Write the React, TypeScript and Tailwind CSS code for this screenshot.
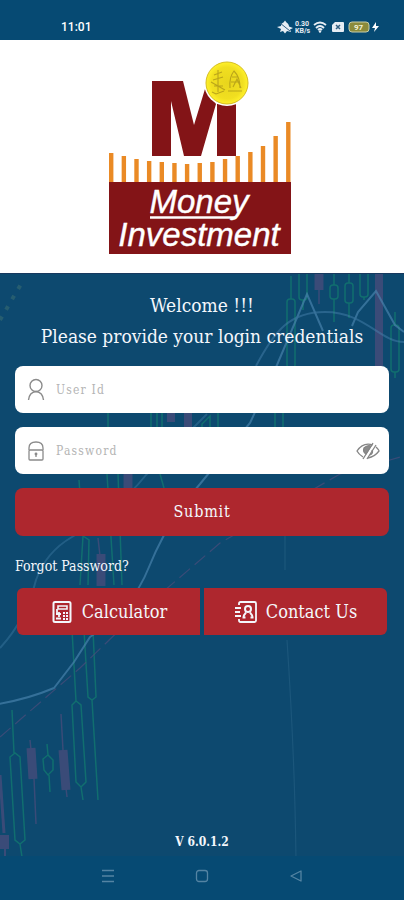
import React, { useState } from "react";

const SERIF = "font-['DejaVu_Serif_Condensed','DejaVu_Serif',serif]";

// [x, bar top, bar bottom, wick top, wick bottom]
const greenCandles = [
  [291, 299, 368, 276, 372],
  [303, 262, 300, 258, 310],
  [334, 285, 299, 270, 322],
  [349, 283, 303, 270, 318],
  [364, 262, 297, 258, 300],
  [395, 325, 372, 312, 378],
];

const bars = [30, 27, 24, 22, 21, 20, 19, 20, 21, 24, 27, 31, 37, 47, 61];

const MarketBackdrop = () => (
  <svg
    className="absolute inset-0 h-full w-full"
    viewBox="0 274 404 582"
    preserveAspectRatio="xMidYMid slice"
    fill="none"
    aria-hidden="true"
  >
    <g stroke="#12786f" strokeWidth="1.5" opacity="0.8">
      {greenCandles.map(([x, top, bottom, wickTop, wickBottom]) => (
        <g key={`${x}-${top}`}>
          <path d={`M${x} ${wickTop}V${top}M${x} ${bottom}V${wickBottom}`} />
          <rect x={x - 4} y={top} width="8" height={bottom - top} rx="3" />
        </g>
      ))}
      <path d="M108 410V428M151 410V428M157 410V428M162 410V428M202 428V424L210 416V428M218 412V428M275 410V428M283 410V428" />
      {/* lower left cluster leans slightly to the right */}
      <path d="M12 710L14 753M10 757L15 753L20 757L25 840L20 844L15 840ZM20 844L22 857" />
      <path d="M47 744L48 755M43 759L48 755L53 760V770L48 775L44 770ZM49 775L50 792" />
      <path d="M72 630L76 701M72 705L76 701L81 705L86 782L81 787L76 782ZM81 787L83 800" />
      <path d="M84 630L88 697L92 700L96 697L93 630M92 700L98 800" />
      <path d="M79 480L83 536L80 585M83 536L89 540L88 585M107 474L114 585M118 474L122 585M160 474L164 488" />
    </g>
    <g stroke="#4d4d7c" opacity="0.7">
      <path d="M319 274V290" strokeWidth="9" />
      <path d="M319 290V304" strokeWidth="1.5" />
      <path d="M379 274V366" strokeWidth="8" />
      <path d="M188 412V428" strokeWidth="8" />
      <path d="M171 412V422" strokeWidth="8" />
      <path d="M128 474V488" strokeWidth="9" />
      <path d="M101 554V586" strokeWidth="9" />
      <path d="M98 538L100 556M30 740L31 750M34 778L36 824M61 714L63 750M66 788L67 797" strokeWidth="1.5" />
      <path d="M31 748L33 779M63 750L66 790" strokeWidth="9" />
      <path d="M0 775L4 833" strokeWidth="3" />
      <path d="M0 842H9" strokeWidth="14" />
      <path d="M5 848V858" strokeWidth="2" />
      <path d="M0 737L80 668L130 620L220 543L340 474L404 456" strokeWidth="1.2" strokeDasharray="14 6" />
    </g>
    <g stroke="#4b86b0" strokeWidth="2" opacity="0.65">
      <path d="M-2 704Q28 699 54 688L74 662L90 637Q132 610 149 567Q168 520 200 484L250 423L277 365L307 294L323 331" />
      <path d="M352 326L358 312L376 291L395 325L404 332" />
      <path d="M256 366C275 330 290 312 325 312C365 312 380 342 404 342" opacity="0.7" />
      <path d="M0 648Q26 620 36 580Q46 552 72 537Q118 510 146 475L207 414" opacity="0.55" />
    </g>
    <path d="M287 640Q295 760 296 862M285 490V570" stroke="#2a6387" strokeWidth="1.2" opacity="0.5" />
    <path d="M0 320L24 279" stroke="#4d7c72" strokeWidth="4" strokeDasharray="4 8" opacity="0.4" />
  </svg>
);

const StatusBar = () => (
  <div className="flex h-10 items-center justify-between bg-[#064a73] pt-3.5 pr-6 pl-[61px] text-white">
    <span className="font-[Roboto,sans-serif] text-[12px] leading-4 font-medium">11:01</span>
    <svg className="h-4 w-[104px]" viewBox="0 0 104 16" fill="none" role="img" aria-label="Status icons">
      <path
        d="M1 8L5 7C5 5 6 4 7.500 3.500L9 1.500L10.500 3.500C12 4 13 6 13 7.500L17 9L14 10.500L15 13L11 12L9 14.500L7 12L4 13L5 10Z"
        fill="#e6edf4"
      />
      <path d="M4 4L14 12" stroke="#315f82" />
      <text x="19" y="7" fontSize="7" fontWeight="700" fontFamily="Roboto, sans-serif" fill="#e6edf4">
        0.30
        <tspan x="19" y="14">KB/s</tspan>
      </text>
      <path d="M38 6Q44 1 50 6M40 9Q44 5 48 9M42 11Q44 9 46 11" stroke="#e6edf4" strokeWidth="1.8" />
      <circle cx="44" cy="12.5" r="1.2" fill="#e6edf4" />
      <path d="M59 3H67Q68 3 68 4V12Q68 13 67 13H57Q56 13 56 12V6Z" fill="#e6edf4" />
      <path d="M60 6L64 10M64 6L60 10" stroke="#315f82" strokeWidth="1.5" />
      <rect x="73" y="3" width="20" height="10" rx="3" fill="#8b8b3b" stroke="#c7cda8" />
      <text x="78" y="11" fontSize="8" fontWeight="700" fontFamily="Roboto, sans-serif" fill="#f2f2d8">97</text>
      <path d="M100 3L96 9H99L98 13L103 7H100Z" fill="#fff" />
    </svg>
  </div>
);

const Logo = () => (
  <svg className="h-[194px] w-[188px]" viewBox="108 60 188 194" role="img" aria-label="Money Investment">
    <defs>
      <radialGradient id="coin">
        <stop offset="0" stopColor="#e8d51d" />
        <stop offset="0.75" stopColor="#f1df20" />
        <stop offset="1" stopColor="#fff12b" />
      </radialGradient>
    </defs>
    <g fill="#831417">
      <path d="M152 81H183L194 125L205 89L216 104L201 156H184L171 101V156H152Z" />
      <path d="M217 104H236V156H217Z" />
    </g>
    <circle cx="227" cy="83" r="23" fill="#fff" />
    <circle cx="227" cy="83" r="21" fill="url(#coin)" stroke="#d6be20" />
    <g stroke="#a99318" strokeWidth="1.1" fill="none" opacity="0.75">
      <path d="M218 70V92M214 75L222 72M213 80L223 77M214 86H223M211 82L225 90M212 92L216 94L224 91" />
      <path d="M230 88Q229 77 234 71Q240 77 240 88M232 77H238M231 82H240M233 87L237 79L241 88M228 91H242" />
    </g>
    <g fill="#ea8a25">
      {bars.map((height, i) => (
        <rect key={i} x={109 + i * 12.65} y={183 - height} width="4.4" height={height} />
      ))}
    </g>
    <rect x="109" y="182" width="182" height="72" fill="#831417" />
    <text
      x="199"
      y="213"
      textAnchor="middle"
      fill="#fff"
      stroke="#fff"
      strokeWidth="0.4"
      fontFamily="Liberation Sans, sans-serif"
      fontStyle="italic"
      fontSize="33"
    >
      Money
      <tspan x="199" y="246">Investment</tspan>
    </text>
    <path d="M150 217.5H235" stroke="#fff" strokeWidth="2.5" />
  </svg>
);

const UserIcon = () => (
  <svg className="h-6 w-6 shrink-0" viewBox="0 0 24 24" fill="none" stroke="#8b8b8b" strokeWidth="1.4" aria-hidden="true">
    <circle cx="12" cy="7.5" r="6" />
    <path d="M4.5 22C5 17 8 14 12 13.5C16 14 19 17 19.5 22" />
  </svg>
);

const LockIcon = () => (
  <svg className="h-6 w-6 shrink-0" viewBox="0 0 24 24" fill="none" stroke="#8b8b8b" strokeWidth="1.3" aria-hidden="true">
    <rect x="5" y="11" width="14" height="10" rx="1" />
    <path d="M5 11V9C5 5 8 3 12 3S19 5 19 9V11M12 15V18" />
    <circle cx="12" cy="15" r="0.8" fill="#8b8b8b" />
  </svg>
);

const EyeOffIcon = () => (
  <svg className="h-6 w-6" viewBox="0 0 24 24" fill="none" stroke="#858585" strokeWidth="1.3" aria-hidden="true">
    <path d="M7 18C4 16 2 14 1 12C5 6 11 4 17 6M20 8C21 9 23 11 23 12C20 16 17 18 12 19" />
    <path d="M17 4L7 20M20 6L11 20" />
    <path d="M8 9C7 12 8 14 10 15L15 7C12 6 10 7 8 9Z" fill="#8b8b8b" />
    <path d="M16 11C17 13 16 15 14 16" />
  </svg>
);

const CalculatorIcon = () => (
  <svg className="h-6 w-6" viewBox="0 0 24 24" fill="none" stroke="currentColor" strokeWidth="2" aria-hidden="true">
    <rect x="3.5" y="2" width="17" height="20" rx="1.5" />
    <path d="M8 6H17V9H8Z" strokeWidth="1.6" />
    <path d="M7 9V13M6 14H11M9 12V17M6 18.5H11" strokeWidth="1.8" />
    <path d="M14 12V20M17 12V20" strokeWidth="2" strokeDasharray="2 1" />
  </svg>
);

const ContactIcon = () => (
  <svg className="h-6 w-6" viewBox="0 0 24 24" fill="none" stroke="currentColor" strokeWidth="1.8" aria-hidden="true">
    <path d="M5 5V3.5Q5 2 6.5 2H20.5Q22 2 22 3.5V20.5Q22 22 20.5 22H6.5Q5 22 5 20.5V19" />
    <path d="M1 8H7M1 12H6M1 16H7" />
    <circle cx="14" cy="9" r="3" strokeWidth="2" />
    <path d="M9.5 18Q9.5 15 12 12.5M18.5 18Q18.5 15 16 12.5M8.5 17.5H11.5M16.5 17.5H19.5" strokeWidth="2" />
  </svg>
);

const NavBar = () => (
  <nav className="flex h-11 items-center justify-center gap-20 bg-[#064a73] pb-1 text-[#5484a3]">
    <button type="button" aria-label="Recent apps">
      <svg className="h-3.5 w-3.5" viewBox="0 0 14 14" fill="none" stroke="currentColor" strokeWidth="1.5">
        <path d="M1 1.5H13M1 7H13M1 12.5H13" />
      </svg>
    </button>
    <button type="button" aria-label="Home">
      <svg className="h-3.5 w-3.5" viewBox="0 0 14 14" fill="none" stroke="currentColor" strokeWidth="1.3">
        <rect x="1.5" y="1.5" width="11" height="11" rx="2.5" />
      </svg>
    </button>
    <button type="button" aria-label="Back">
      <svg className="h-3.5 w-3.5" viewBox="0 0 14 14" fill="none" stroke="currentColor" strokeWidth="1.3" strokeLinejoin="round">
        <path d="M12 2V12L2 7Z" />
      </svg>
    </button>
  </nav>
);

const App = () => {
  const [showPassword, setShowPassword] = useState(false);

  return (
    <div className={`flex min-h-screen flex-col bg-[#0d496f] text-[#f4f7fc] ${SERIF}`}>
      <StatusBar />
      <header className="flex justify-center border-b border-[#17395f] bg-white pt-5 pb-[19px]">
        <Logo />
      </header>

      <main className="relative flex flex-1 flex-col overflow-hidden">
        <MarketBackdrop />
        <div className="relative flex flex-1 flex-col px-[15px] pt-4">
          <h1 className="text-center text-[19px] leading-[31px]">
            Welcome !!!
            <br />
            Please provide your login credentials
          </h1>

          <form className="mt-3.5 flex flex-col gap-3.5" onSubmit={(e) => e.preventDefault()}>
            <label className="flex h-[47px] items-center gap-2 rounded-lg bg-white px-[9px]">
              <UserIcon />
              <input
                aria-label="User Id"
                placeholder="User Id"
                className="min-w-0 flex-1 text-[12px] tracking-widest text-gray-700 outline-none placeholder:text-[#b4b4b4]"
              />
            </label>
            <div className="flex h-[47px] items-center gap-2 rounded-lg bg-white px-[9px]">
              <LockIcon />
              <input
                type={showPassword ? "text" : "password"}
                aria-label="Password"
                placeholder="Password"
                className="min-w-0 flex-1 text-[12px] tracking-widest text-gray-700 outline-none placeholder:text-[#b4b4b4]"
              />
              <button type="button" aria-label="Show password" onClick={() => setShowPassword(!showPassword)}>
                <EyeOffIcon />
              </button>
            </div>
            <button type="submit" className="h-12 rounded-lg bg-[#ae272e] text-[16px] tracking-wider">
              Submit
            </button>
          </form>

          <a href="#forgot" className="mt-5 self-start text-[14px] leading-5">
            Forgot Password?
          </a>

          <div className="mt-3 grid grid-cols-2 gap-1 px-0.5 text-[18px]">
            <button type="button" className="flex h-[47px] items-center justify-center gap-2 rounded-l-md bg-[#ae272e]">
              <CalculatorIcon />
              Calculator
            </button>
            <button type="button" className="flex h-[47px] items-center justify-center gap-2 rounded-r-md bg-[#ae272e]">
              <ContactIcon />
              Contact Us
            </button>
          </div>

          <p className="mt-auto pb-1 text-center text-[12px] leading-5 font-bold">V 6.0.1.2</p>
        </div>
      </main>

      <NavBar />
    </div>
  );
};

export default App;
